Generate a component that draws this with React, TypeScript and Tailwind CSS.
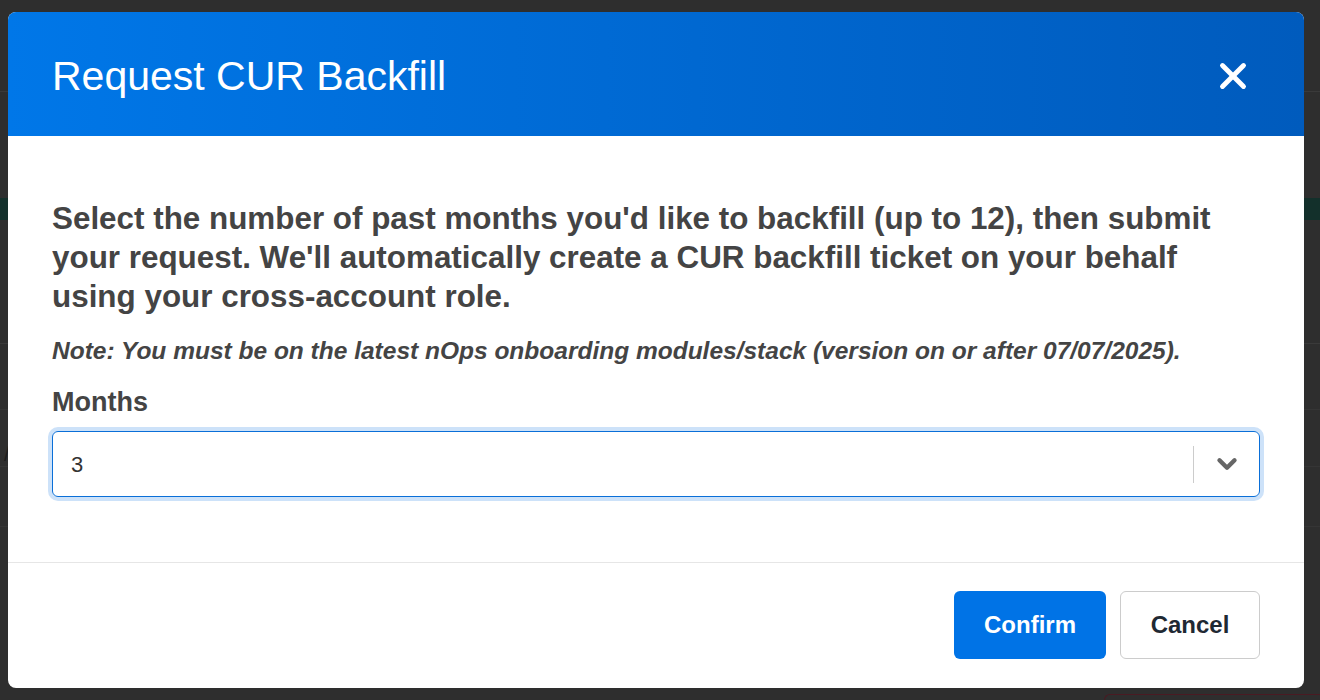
import { X, ChevronDown } from "lucide-react";

// ================= BACKGROUND PAGE =================
function BackgroundPage() {
  return (
    <div className="h-[700px] w-full flex flex-col">
      <div className="h-[92px] border-b border-[#3a3a3a]" />
      <div className="h-[106px]" />
      <div className="h-[22px] bg-[#13302b]" />
      <div className="h-[124px] border-b border-[#3a3a3a]" />
      <div className="h-[66px] border-b border-[#353535]" />
      <div className="h-[57px] border-b border-[#353535] flex items-end">
        <span className="pl-1 text-[#1c1c1c] text-xl leading-6">/</span>
      </div>
      <div className="h-[60px] border-b border-[#353535]" />
      <div className="flex-1 flex justify-end items-end">
        <div className="w-[216px] h-[6px] rounded-tl-md border-t border-l border-[#4a1a22]" />
      </div>
    </div>
  );
}

// ================= MODAL =================
export default function App() {
  return (
    <main className="relative h-[700px] w-full overflow-hidden bg-[#2e2e2e] font-['Liberation_Sans',Arial,sans-serif]">
      <BackgroundPage />

      <div className="absolute left-2 top-3 w-[1296px] h-[676px] bg-white rounded-lg overflow-hidden flex flex-col">
        {/* HEADER */}
        <div className="h-[124px] shrink-0 flex items-center justify-between pl-11 pr-[50px] pt-1 bg-gradient-to-r from-[#0077e8] to-[#005bbd]">
          <h1 className="text-white text-[41px] leading-none">Request CUR Backfill</h1>
          <button className="text-white">
            <X size={42} strokeWidth={2.8} />
          </button>
        </div>

        {/* BODY */}
        <div className="h-[427px] shrink-0 border-b border-[#e6e6e6] px-11 pt-[63px]">
          <p className="text-[31.4px] leading-[39px] font-bold text-[#444444] pr-4">
            Select the number of past months you'd like to backfill (up to 12), then submit your request. We'll
            automatically create a CUR backfill ticket on your behalf using your cross-account role.
          </p>
          <p className="mt-[21px] text-[24.5px] leading-[28px] font-bold italic text-[#444444]">
            Note: You must be on the latest nOps onboarding modules/stack (version on or after 07/07/2025).
          </p>
          <p className="mt-[21px] text-[27px] leading-[32px] font-bold text-[#444444]">Months</p>

          <div className="mt-[13px] h-[66px] rounded-md border border-[#0a6fd8] ring-4 ring-[#cde2f9] flex items-center">
            <span className="flex-1 pl-[18px] text-[22px] text-[#333333]">3</span>
            <span className="w-px h-[37px] bg-[#cccccc]" />
            <span className="w-[65px] flex justify-center text-[#666666]">
              <ChevronDown size={30} strokeWidth={3.5} />
            </span>
          </div>
        </div>

        {/* FOOTER */}
        <div className="flex-1 flex items-center justify-end gap-[14px] pr-11 pb-px">
          <button className="w-[152px] h-[68px] rounded-md bg-[#0073e6] text-white text-[24px] font-bold">
            Confirm
          </button>
          <button className="w-[140px] h-[68px] rounded-md border border-[#cccccc] bg-white text-[#1f2933] text-[24px] font-bold">
            Cancel
          </button>
        </div>
      </div>
    </main>
  );
}
